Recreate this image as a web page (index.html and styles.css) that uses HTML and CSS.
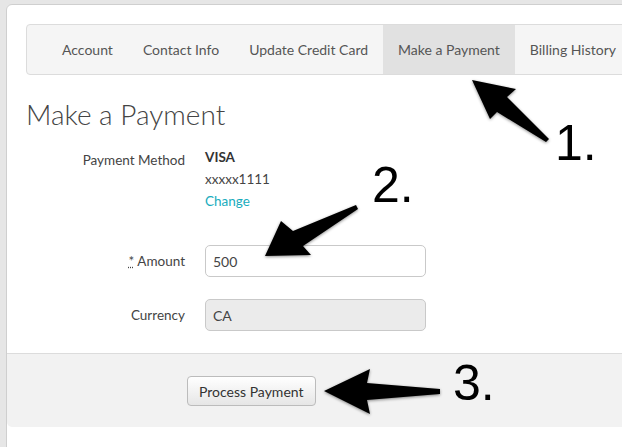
FILE: index.html
```html
<!DOCTYPE html>
<html lang="en">
<head>
    <meta charset="UTF-8">
    <meta name="viewport" content="width=device-width, initial-scale=1.0">
    <title>Make a Payment</title>
    <link rel="stylesheet" href="styles.css">
</head>
<body>
    <div class="page">
        <div class="panel">
            <!-- Account tabs -->
            <ul class="tabs">
                <li><a href="#account">Account</a></li>
                <li><a href="#contact">Contact Info</a></li>
                <li><a href="#credit-card">Update Credit Card</a></li>
                <li class="active"><a href="#payment">Make a Payment</a></li>
                <li><a href="#billing">Billing History</a></li>
            </ul>

            <h1 class="page-title">Make a Payment</h1>

            <form class="payment-form">
                <div class="form-row">
                    <span class="form-label label-top">Payment Method</span>
                    <div class="form-value">
                        <div class="card-type">VISA</div>
                        <div class="card-number">xxxxx1111</div>
                        <a href="#change" class="change-link">Change</a>
                    </div>
                </div>

                <div class="form-row row-amount">
                    <label class="form-label" for="amount"><abbr title="required">*</abbr> Amount</label>
                    <input type="text" id="amount" class="text-input" value="500">
                </div>

                <div class="form-row row-currency">
                    <label class="form-label" for="currency">Currency</label>
                    <input type="text" id="currency" class="text-input" value="CA" disabled>
                </div>

                <div class="form-actions">
                    <button type="submit" class="btn">Process Payment</button>
                </div>
            </form>
        </div>

        <!-- Screenshot annotations -->
        <div class="annotations">
            <svg class="arrows" width="622" height="447" viewBox="0 0 622 447">
                <polygon points="472,80 516,89 507,97 549,139 546,142 497,112 490,119"/>
                <polygon points="265,256 281,221 293,231 356,205 358,209 303,246 311,255"/>
                <polygon points="324,391 370,369 367,383 440,389 440,394 367,400 370,414"/>
            </svg>
            <span class="step step-1">1.</span>
            <span class="step step-2">2.</span>
            <span class="step step-3">3.</span>
        </div>
    </div>
</body>
</html>
```

FILE: styles.css
```css
body {
    margin: 0;
    padding: 0;
    background-color: #e6e6e6;
    font-family: 'Lato', 'Open Sans', sans-serif;
    font-size: 13.5px;
    color: #444;
    overflow: hidden;
}

.page {
    position: relative;
    width: 622px;
    height: 447px;
    overflow: hidden;
}

.panel {
    margin: 4px 0 0 6px;
    width: 660px;
    padding: 19px 19px 40px 19px;
    background-color: #ffffff;
    border: 1px solid #cfcfcf;
    border-radius: 6px;
}

/* Tabs */
.tabs {
    list-style: none;
    margin: 0;
    padding: 0 0 0 20px;
    display: flex;
    height: 49px;
    background-color: #f5f5f5;
    border: 1px solid #dcdcdc;
    border-radius: 4px;
}

.tabs li a {
    display: block;
    padding: 0 15px;
    font-size: 14px;
    line-height: 49px;
    color: #555;
    text-decoration: none;
}

.tabs li.active a {
    background-color: #e1e1e1;
}

.page-title {
    margin: 22px 0 14px 0;
    font-size: 28px;
    line-height: 35px;
    font-weight: 300;
    color: #444;
}

/* Form */
.form-row {
    display: grid;
    grid-template-columns: 159px 221px;
    column-gap: 20px;
}

.row-amount,
.row-currency {
    align-items: center;
}

.row-amount {
    margin-top: 33px;
}

.row-currency {
    margin-top: 22px;
}

.form-label {
    text-align: right;
    line-height: 22px;
    color: #444;
}

.label-top {
    padding-top: 3px;
}

.form-label abbr {
    text-decoration: underline dotted;
}

.form-value {
    line-height: 22px;
}

.card-type {
    font-weight: 700;
    color: #333;
}

.change-link {
    color: #19acbd;
    text-decoration: none;
}

.text-input {
    box-sizing: border-box;
    width: 221px;
    height: 32px;
    padding: 0 7px;
    font-family: inherit;
    font-size: 14px;
    color: #444;
    background-color: #ffffff;
    border: 1px solid #c9c9c9;
    border-radius: 5px;
}

.text-input:disabled {
    background-color: #ebebeb;
    color: #444;
}

.form-actions {
    margin: 22px -19px 0 -19px;
    padding: 22px 0 21px 180px;
    background-color: #f2f2f2;
    border-top: 1px solid #dcdcdc;
    border-radius: 0 0 5px 5px;
}

.btn {
    height: 30px;
    padding: 0 11px;
    font-family: inherit;
    font-size: 14px;
    color: #333;
    background: linear-gradient(#ffffff, #e6e6e6);
    border: 1px solid #bcbcbc;
    border-radius: 4px;
    cursor: pointer;
}

/* Annotations over the screenshot */
.annotations {
    position: absolute;
    top: 0;
    left: 0;
    width: 622px;
    height: 447px;
    pointer-events: none;
}

.arrows {
    position: absolute;
    top: 0;
    left: 0;
    fill: #000;
    filter: drop-shadow(0 1px 1.5px rgba(0, 0, 0, 0.45));
}

.step {
    position: absolute;
    font-family: 'Liberation Sans', Arial, sans-serif;
    font-size: 50px;
    line-height: 50px;
    color: #000;
}

.step-1 {
    left: 555px;
    top: 118px;
}

.step-2 {
    left: 372px;
    top: 160px;
}

.step-3 {
    left: 453px;
    top: 358px;
}
```
